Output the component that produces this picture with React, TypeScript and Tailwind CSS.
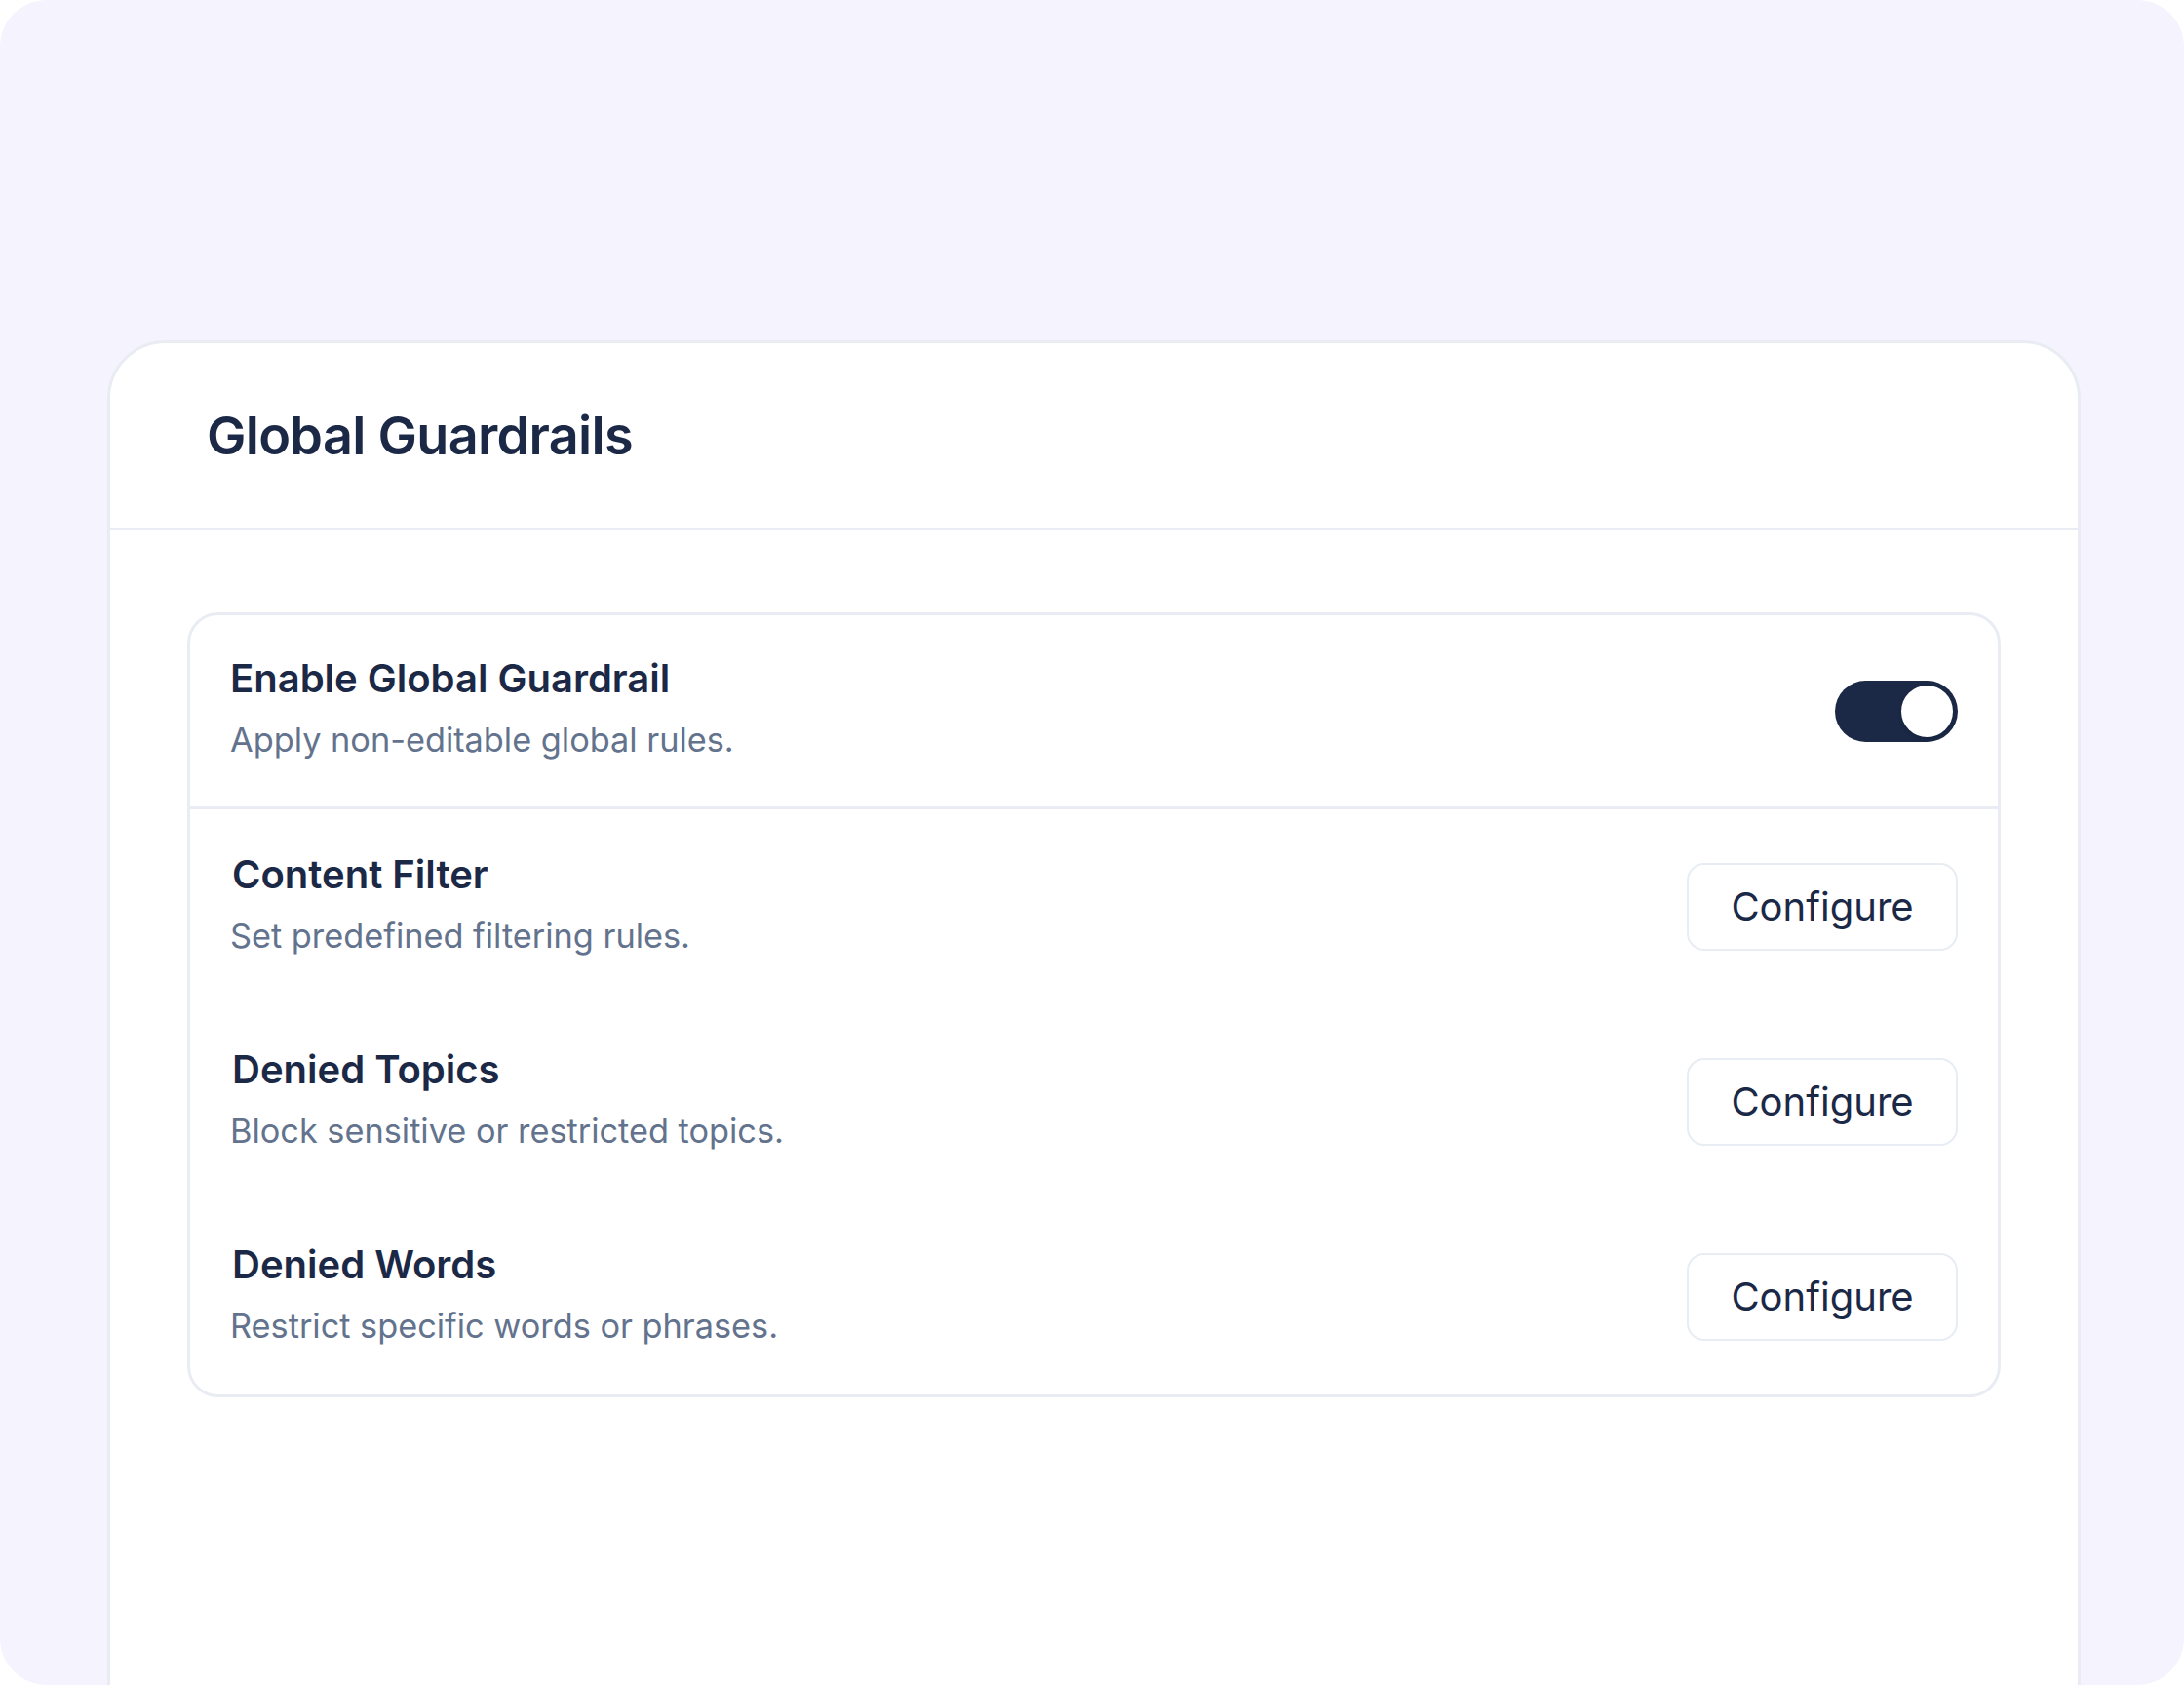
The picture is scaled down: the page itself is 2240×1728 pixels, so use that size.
import React from "react";

function Row({ title, desc }: { title: string; desc: string }) {
  return (
    <div className="flex h-[200px] items-center justify-between px-[41px]">
      <div className="mb-[3px] flex flex-col">
        <div className="pl-[2px] text-[40px] font-semibold leading-[48px] text-[#1b2947]">{title}</div>
        <div className="mt-[15px] text-[34.3px] leading-[48px] text-[#63738d]">{desc}</div>
      </div>
      <button className="flex h-[90px] w-[278px] items-center justify-center rounded-[18px] border-2 border-[#e8edf3] bg-white text-[40px] text-[#1b2947]">
        Configure
      </button>
    </div>
  );
}

export default function App() {
  return (
    <div className="h-[1728px] w-[2240px] bg-white font-['Inter',sans-serif]">
      <div className="h-[1728px] w-[2240px] overflow-hidden rounded-[48px] bg-[#f5f3fd] pl-[110px] pr-[106px] pt-[349px]">
        <div className="h-[1500px] rounded-t-[60px] border-[3px] border-[#e9edf3] bg-white">
          <div className="flex h-[192px] items-center border-b-[3px] border-[#e9edf3] pl-[99px]">
            <h1 className="text-[54px] font-semibold tracking-[-0.7px] text-[#1b2947]">Global Guardrails</h1>
          </div>
          <div className="px-[79px] pt-[84px]">
            <div className="rounded-[32px] border-[3px] border-[#e9edf3]">
              <div className="flex h-[199px] items-center justify-between border-b-[3px] border-[#e9edf3] px-[41px]">
                <div className="mb-[3px] flex flex-col">
                  <div className="text-[40px] font-semibold leading-[48px] text-[#1b2947]">Enable Global Guardrail</div>
                  <div className="mt-[15px] text-[34.3px] leading-[48px] text-[#63738d]">Apply non-editable global rules.</div>
                </div>
                <div className="flex h-[63px] w-[126px] items-center justify-end rounded-full bg-[#1b2947] pr-[5px]">
                  <div className="h-[53px] w-[53px] rounded-full bg-white shadow-[0_2px_4px_rgba(0,0,0,0.15)]" />
                </div>
              </div>
              <div>
                <Row title="Content Filter" desc="Set predefined filtering rules." />
                <Row title="Denied Topics" desc="Block sensitive or restricted topics." />
                <Row title="Denied Words" desc="Restrict specific words or phrases." />
              </div>
            </div>
          </div>
        </div>
      </div>
    </div>
  );
}
